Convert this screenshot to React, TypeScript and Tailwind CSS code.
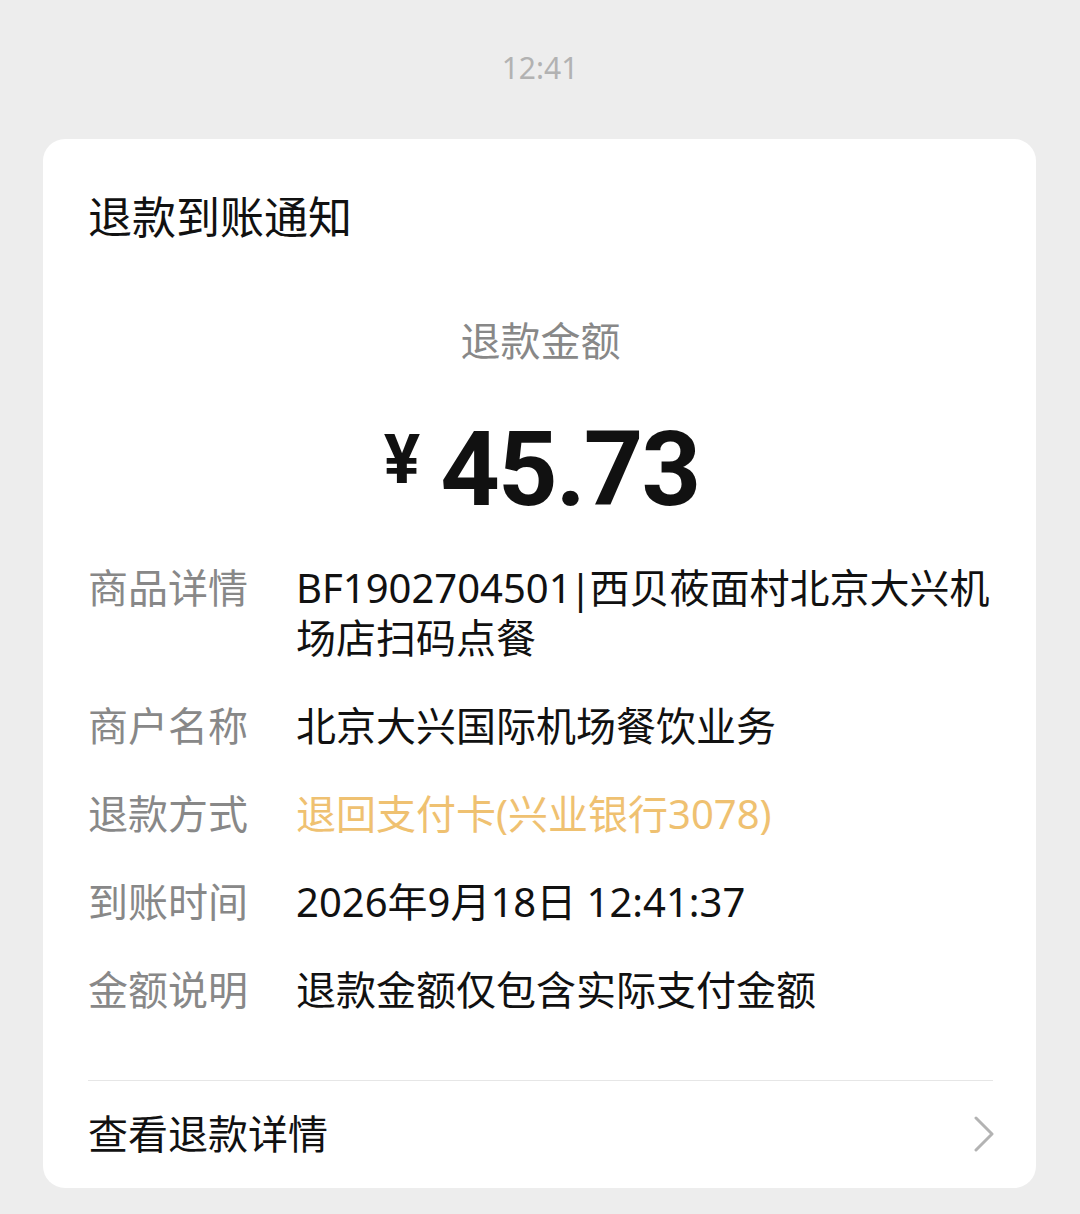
const CJK = "font-['Noto_Sans','Noto_Sans_CJK_SC',sans-serif]";

const ROWS: { label: string; lines: React.ReactNode[]; accent?: boolean }[] = [
  {
    label: '商品详情',
    lines: [
      <>BF1902704501<span className="-mx-[2px]">|</span>西贝莜面村北京大兴机</>,
      '场店扫码点餐',
    ],
  },
  { label: '商户名称', lines: ['北京大兴国际机场餐饮业务'] },
  { label: '退款方式', lines: ['退回支付卡(兴业银行3078)'], accent: true },
  { label: '到账时间', lines: ['2026年9月18日 12:41:37'] },
  { label: '金额说明', lines: ['退款金额仅包含实际支付金额'] },
];

export default function App() {
  return (
    <div className={`min-h-[1214px] w-[1080px] bg-[#ededed] pt-[50px] ${CJK}`}>
      {/* Timestamp */}
      <div className="text-center text-[30px] leading-[36px] text-[#b2b2b2]">12:41</div>

      {/* Notification card */}
      <div className="mt-[53px] ml-[43px] w-[993px] rounded-[22px] bg-white px-[45px] pr-[43px] pt-[50px]">
        <h1 className="text-[44px] leading-[56px] text-[#111]">退款到账通知</h1>

        <p className="mt-[72px] text-center text-[40px] leading-[48px] text-[#888]">退款金额</p>

        <div className="mt-[50px] flex h-[110px] items-center justify-center pl-[2px] text-[#111]">
          <span className="mb-[20px] mr-[20px] font-['Roboto',sans-serif] text-[68px] font-bold leading-none">¥</span>
          <span className="font-['Roboto',sans-serif] text-[104px] font-bold leading-none tracking-[-2px]">45.73</span>
        </div>

        {/* Detail rows */}
        <div className="mt-[38px] flex flex-col gap-[38px]">
          {ROWS.map((row) => (
            <div key={row.label} className="flex text-[40px] leading-[50px]">
              <span className="w-[208px] shrink-0 text-[#888]">{row.label}</span>
              <div className={row.accent ? 'text-[#efc171]' : 'text-[#111]'}>
                {row.lines.map((line, i) => (
                  <div key={i} className="whitespace-nowrap">{line}</div>
                ))}
              </div>
            </div>
          ))}
        </div>

        <div className="mt-[65px] h-px bg-[#e6e6e6]" />

        {/* Footer link */}
        <div className="flex h-[107px] items-center justify-between pb-[2px]">
          <span className="text-[40px] leading-[50px] text-[#111]">查看退款详情</span>
          <svg width="20" height="36" viewBox="0 0 20 36" fill="none" className="mr-[-1px]">
            <polyline points="2,2 18,18 2,34" stroke="#b3b3b3" strokeWidth="3" strokeLinecap="round" strokeLinejoin="round" />
          </svg>
        </div>
      </div>
    </div>
  );
}
